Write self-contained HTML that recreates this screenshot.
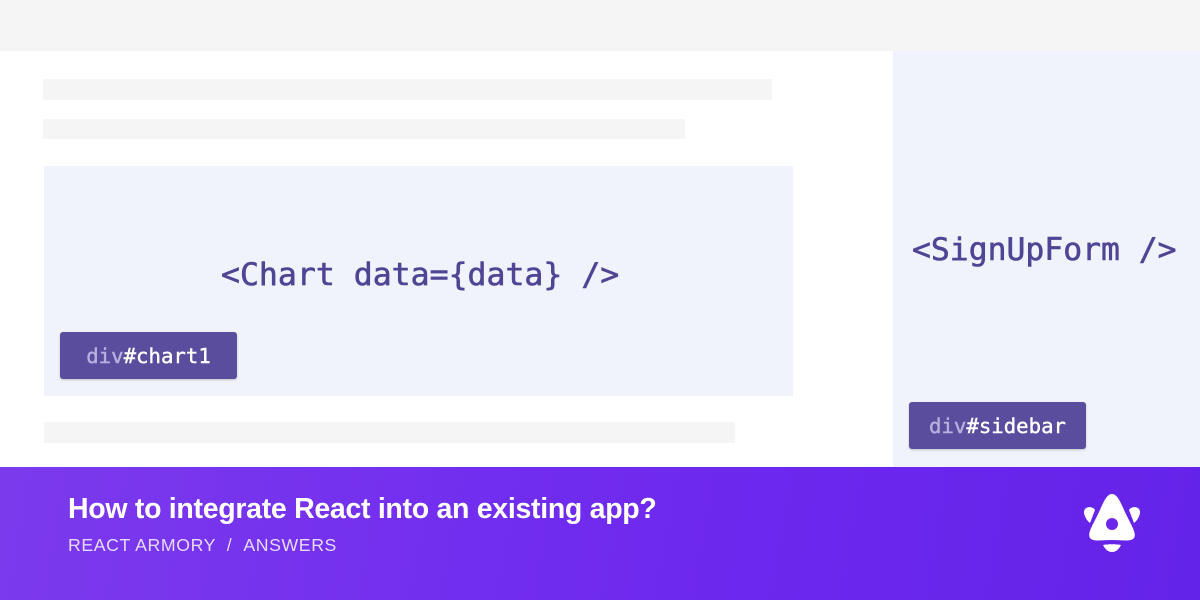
<!DOCTYPE html>
<html><head><style>
html,body{margin:0;padding:0}
body{width:1200px;height:600px;position:relative;overflow:hidden;background:#fff;font-family:"Liberation Sans",sans-serif}
.a{position:absolute}
.mono{font-family:"DejaVu Sans Mono","Liberation Mono",monospace;color:#4f4594;-webkit-text-stroke:0.6px #4f4594}
.lbl{background:#5a4d9e;border-radius:3px;color:#fff;font-family:"DejaVu Sans Mono",monospace;font-size:20.7px;-webkit-text-stroke:0.4px #fff;display:flex;align-items:center;justify-content:center;box-shadow:0 1px 2px rgba(0,0,0,.2)}
.lbl span{color:#b9b0e0;-webkit-text-stroke:0.4px #b9b0e0}
</style></head><body>
<div class="a" style="left:0;top:0;width:1200px;height:51px;background:#f5f5f5"></div>
<div class="a" style="left:893px;top:51px;width:307px;height:416px;background:#f0f3fb"></div>
<div class="a" style="left:43px;top:79px;width:729px;height:21px;background:#f5f5f5"></div>
<div class="a" style="left:43px;top:119px;width:642px;height:20px;background:#f5f5f5"></div>
<div class="a" style="left:44px;top:166px;width:749px;height:230px;background:#f0f3fb"></div>
<div class="a" style="left:44px;top:422px;width:691px;height:21px;background:#f5f5f5"></div>
<div class="a mono" style="left:221px;top:255px;font-size:31.5px;line-height:40px">&lt;Chart data={data} /&gt;</div>
<div class="a mono" style="left:912px;top:230px;font-size:31.4px;line-height:40px">&lt;SignUpForm /&gt;</div>
<div class="a lbl" style="left:60px;top:332px;width:177px;height:47px"><span>div</span>#chart1</div>
<div class="a lbl" style="left:909px;top:402px;width:177px;height:47px"><span>div</span>#sidebar</div>
<div class="a" style="left:0;top:467px;width:1200px;height:133px;background:linear-gradient(100deg,#7c3aed 0%,#6d28ee 60%,#6423e8 100%)"></div>
<div class="a" style="left:68px;top:492px;color:#fff;font-weight:bold;font-size:28.5px;line-height:34px;letter-spacing:-0.3px">How to integrate React into an existing app?</div>
<div class="a" style="left:68px;top:534px;color:#e6dcff;font-size:17.7px;line-height:22px;letter-spacing:0.6px">REACT ARMORY &nbsp;/ &nbsp;ANSWERS</div>
<svg class="a" style="left:1080px;top:490px" width="64" height="66" viewBox="0 0 64 66">
<path d="M32 4 C37 4 40 11 45 22 C51 35 57 43 54 48 C51 52 43 50 32 50 C21 50 13 52 10 48 C7 43 13 35 19 22 C24 11 27 4 32 4Z" fill="#fff"/>
<circle cx="32" cy="34" r="6" fill="#6d28ee"/>
<path d="M6 18 C10 16 14 18 15 20 L10 33 C6 30 4 25 4 22 C4 20 5 19 6 18Z" fill="#fff"/>
<path d="M58 18 C54 16 50 18 49 20 L54 33 C58 30 60 25 60 22 C60 20 59 19 58 18Z" fill="#fff"/>
<path d="M23 55 C28 54 36 54 41 55 C39 59 36 62 32 62 C28 62 25 59 23 55Z" fill="#fff"/>
</svg>
</body></html>
